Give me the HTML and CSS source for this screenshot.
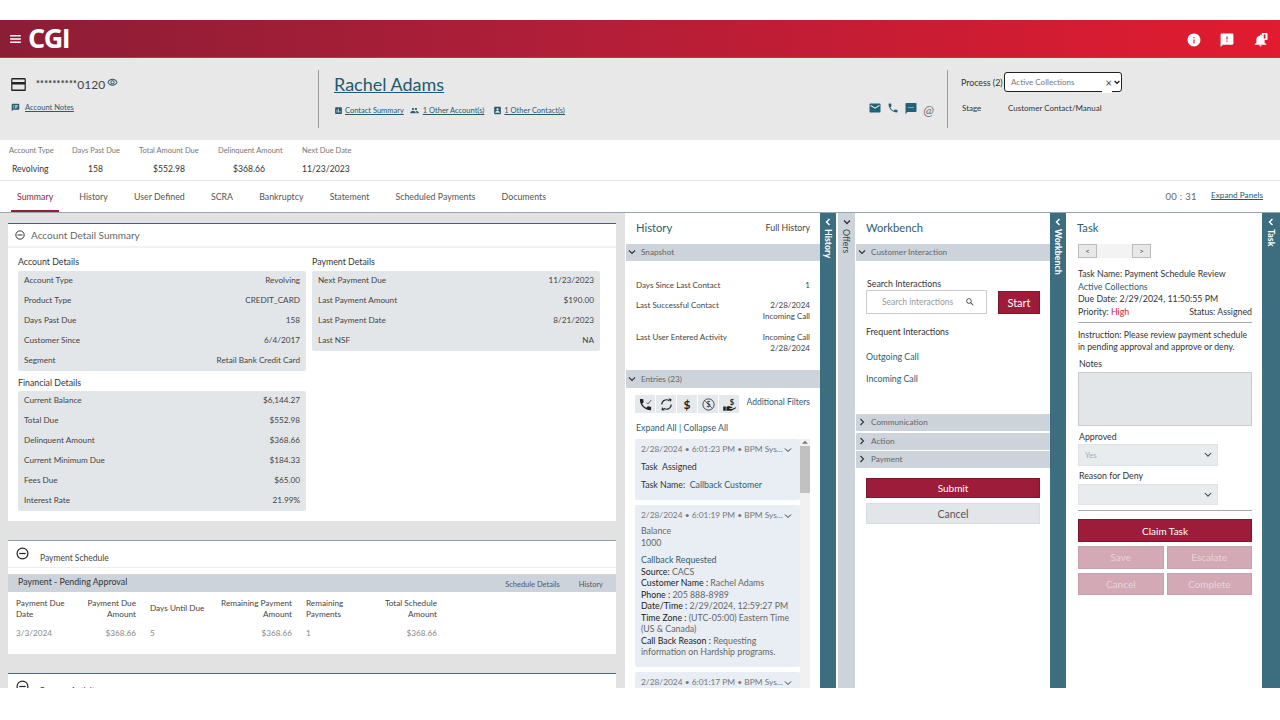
FILE: index.html
```html
<!DOCTYPE html>
<html lang="en">
<head>
    <meta charset="UTF-8">
    <meta name="viewport" content="width=device-width, initial-scale=1.0">
    <title>Collections Workspace</title>
    <link rel="stylesheet" href="styles.css">
</head>
<body>
    <div class="page">
        <header class="topbar">
            <svg class="menu-icon" viewBox="0 0 12 9"><path d="M0 0h12v1.800H0zM0 3.600h12v1.800H0zM0 7.200h12V9H0z"/></svg>
            <span class="logo">CGI</span>
            <div class="topbar-icons">
                <svg viewBox="0 0 24 24"><path d="M12 1C5.900 1 1 5.900 1 12s4.900 11 11 11 11-4.900 11-11S18.100 1 12 1zm1 17h-2v-7h2v7zm0-9h-2V7h2v2z"/></svg>
                <svg viewBox="0 0 24 24"><path d="M21 1H3C1.900 1 1 1.900 1 3v21l4-4h16c1.100 0 2-.9 2-2V3c0-1.100-.9-2-2-2zm-8 10h-2V6h2v5zm0 4h-2v-2h2v2z"/></svg>
                <svg class="bell" viewBox="0 0 24 24">
                    <path d="M12 23c1.100 0 2-.9 2-2h-4c0 1.100.89 2 2 2zm7-6v-6c0-3.070-1.640-5.640-5-6.320V4c0-.83-.67-1.500-1.500-1.500S11 3.170 11 4v.68C6.630 5.360 5 7.920 5 11v6l-3 2v1h20v-1l-3-2z"/>
                    <rect x="14" y="0" width="10" height="12" rx="1.500"/>
                    <rect x="17.500" y="2.500" width="3" height="7" fill="#e01b2f"/>
                </svg>
            </div>
        </header>

        <section class="account-bar">
            <div class="account-col">
                <div class="account-number">
                    <svg class="card-icon" viewBox="3 4 18 16"><path d="M19.500 4h-15C3.400 4 3 4.900 3 6v12c0 1.100.4 2 1.500 2h15c1.100 0 1.500-.9 1.500-2V6c0-1.100-.4-2-1.500-2zm0 14.200h-15V12h15v6.200zm0-9.200h-15V5.800h15V9z"/></svg>
                    <span class="stars">**********</span><span class="last-digits">0120</span>
                    <svg class="eye-icon" viewBox="0 0 24 24"><path d="M12 6c3.790 0 7.170 2.130 8.820 5.500C19.170 14.870 15.790 17 12 17s-7.170-2.130-8.820-5.500C4.830 8.130 8.210 6 12 6m0-2C7 4 2.730 7.110 1 11.500 2.730 15.890 7 19 12 19s9.270-3.110 11-7.500C21.270 7.110 17 4 12 4zm0 5c1.380 0 2.500 1.120 2.500 2.500S13.380 14 12 14s-2.500-1.120-2.500-2.500S10.620 9 12 9m0-2c-2.480 0-4.500 2.020-4.500 4.500S9.520 16 12 16s4.500-2.020 4.500-4.500S14.480 7 12 7z"/></svg>
                </div>
                <div class="account-notes">
                    <svg class="small-icon" viewBox="0 0 24 24"><path d="M20 2H4c-1.100 0-1.990.9-1.990 2L2 22l4-4h14c1.100 0 2-.9 2-2V4c0-1.100-.9-2-2-2zM8 14H6v-2h2v2zm0-3H6V9h2v2zm0-3H6V6h2v2zm7 6h-5v-2h5v2zm3-3h-8V9h8v2zm0-3h-8V6h8v2z"/></svg>
                    <a href="#" class="small-link">Account Notes</a>
                </div>
            </div>
            <div class="contact-col">
                <div class="contact-main">
                    <a href="#" class="contact-name">Rachel Adams</a>
                    <div class="contact-links">
                        <svg class="small-icon" viewBox="0 0 24 24"><path d="M19 3H5c-1.100 0-2 .9-2 2v14c0 1.100.9 2 2 2h14c1.100 0 2-.9 2-2V5c0-1.100-.9-2-2-2zM9 17H7v-7h2v7zm4 0h-2V7h2v10zm4 0h-2v-4h2v4z"/></svg>
                        <a href="#" class="small-link">Contact Summary</a>
                        <svg class="small-icon people" viewBox="0 0 24 24"><path d="M16 11c1.660 0 2.990-1.340 2.990-3S17.660 5 16 5c-1.660 0-3 1.340-3 3s1.340 3 3 3zm-8 0c1.660 0 2.990-1.340 2.990-3S9.660 5 8 5C6.340 5 5 6.340 5 8s1.340 3 3 3zm0 2c-2.330 0-7 1.170-7 3.500V19h14v-2.500c0-2.330-4.670-3.500-7-3.500zm8 0c-.29 0-.62.02-.97.05 1.160.84 1.970 1.970 1.970 3.450V19h6v-2.500c0-2.330-4.670-3.500-7-3.500z"/></svg>
                        <a href="#" class="small-link accounts-link">1 Other Account(s)</a>
                        <svg class="small-icon contact-card" viewBox="0 0 24 24"><path d="M19 2H5c-1.100 0-2 .9-2 2v16c0 1.100.9 2 2 2h14c1.100 0 2-.9 2-2V4c0-1.100-.9-2-2-2zm-7 4c1.660 0 3 1.340 3 3s-1.340 3-3 3-3-1.340-3-3 1.340-3 3-3zm6 12H6v-1.400c0-2 4-3.100 6-3.100s6 1.100 6 3.100V18z"/></svg>
                        <a href="#" class="small-link">1 Other Contact(s)</a>
                    </div>
                </div>
                <div class="contact-icons">
                    <svg viewBox="0 0 24 24"><path d="M21 3H3C1.900 3 1 3.900 1 5v14c0 1.100.9 2 2 2h18c1.100 0 2-.9 2-2V5c0-1.100-.9-2-2-2zm0 5l-9 5.500L3 8V5.500l9 5.500 9-5.500V8z"/></svg>
                    <svg viewBox="0 0 24 24"><path d="M6.620 10.790c1.440 2.830 3.760 5.140 6.590 6.590l2.200-2.200c.27-.27.67-.36 1.020-.24 1.120.37 2.330.57 3.570.57.55 0 1 .45 1 1V20c0 .55-.45 1-1 1-9.390 0-17-7.610-17-17 0-.55.45-1 1-1h3.500c.55 0 1 .45 1 1 0 1.250.2 2.450.57 3.570.11.350.03.74-.25 1.020l-2.200 2.200z"/></svg>
                    <svg viewBox="0 0 24 24"><path d="M21 2H3C1.900 2 1 2.900 1 4v20l4-4h16c1.100 0 2-.9 2-2V4c0-1.100-.9-2-2-2zM9 12H7v-2h2v2zm4 0h-2v-2h2v2zm4 0h-2v-2h2v2z"/></svg>
                    <span class="at-sign">@</span>
                </div>
            </div>
            <div class="process-col">
                <div class="process-row">
                    <span class="process-label">Process (2)</span>
                    <div class="process-select">
                        <span class="process-value">Active Collections</span>
                        <span class="process-clear">×</span>
                        <svg class="process-arrow" viewBox="0 0 10 7"><path d="M1 1l4 4 4-4" fill="none" stroke="#111" stroke-width="2"/></svg>
                    </div>
                </div>
                <div class="stage-row">
                    <span class="stage-label">Stage</span>
                    <span>Customer Contact/Manual</span>
                </div>
            </div>
        </section>

        <section class="metrics">
            <div class="metric m-type"><span class="metric-label">Account Type</span><span class="metric-value">Revolving</span></div>
            <div class="metric m-days"><span class="metric-label">Days Past Due</span><span class="metric-value">158</span></div>
            <div class="metric m-total"><span class="metric-label">Total Amount Due</span><span class="metric-value">$552.98</span></div>
            <div class="metric m-delinquent"><span class="metric-label">Delinquent Amount</span><span class="metric-value">$368.66</span></div>
            <div class="metric m-next"><span class="metric-label">Next Due Date</span><span class="metric-value">11/23/2023</span></div>
        </section>

        <nav class="tabs">
            <a href="#" class="tab active">Summary</a>
            <a href="#" class="tab">History</a>
            <a href="#" class="tab">User Defined</a>
            <a href="#" class="tab">SCRA</a>
            <a href="#" class="tab">Bankruptcy</a>
            <a href="#" class="tab">Statement</a>
            <a href="#" class="tab">Scheduled Payments</a>
            <a href="#" class="tab">Documents</a>
            <span class="timer">00 : 31</span>
            <a href="#" class="small-link expand-panels">Expand Panels</a>
        </nav>

        <main class="workspace">
            <div class="summary-col">
                <section class="card detail-card">
                    <div class="detail-header">
                        <svg class="minus-icon" viewBox="0 0 12 12"><circle cx="6" cy="6" r="5" /><path d="M3 6h6"/></svg>
                        <span>Account Detail Summary</span>
                    </div>
                    <div class="detail-body">
                        <div class="detail-col">
                            <h4>Account Details</h4>
                            <div class="kv-box">
                                <div class="kv"><span>Account Type</span><span>Revolving</span></div>
                                <div class="kv"><span>Product Type</span><span>CREDIT_CARD</span></div>
                                <div class="kv"><span>Days Past Due</span><span>158</span></div>
                                <div class="kv"><span>Customer Since</span><span>6/4/2017</span></div>
                                <div class="kv"><span>Segment</span><span>Retail Bank Credit Card</span></div>
                            </div>
                            <h4>Financial Details</h4>
                            <div class="kv-box">
                                <div class="kv"><span>Current Balance</span><span>$6,144.27</span></div>
                                <div class="kv"><span>Total Due</span><span>$552.98</span></div>
                                <div class="kv"><span>Delinquent Amount</span><span>$368.66</span></div>
                                <div class="kv"><span>Current Minimum Due</span><span>$184.33</span></div>
                                <div class="kv"><span>Fees Due</span><span>$65.00</span></div>
                                <div class="kv"><span>Interest Rate</span><span>21.99%</span></div>
                            </div>
                        </div>
                        <div class="detail-col">
                            <h4>Payment Details</h4>
                            <div class="kv-box">
                                <div class="kv"><span>Next Payment Due</span><span>11/23/2023</span></div>
                                <div class="kv"><span>Last Payment Amount</span><span>$190.00</span></div>
                                <div class="kv"><span>Last Payment Date</span><span>8/21/2023</span></div>
                                <div class="kv"><span>Last NSF</span><span>NA</span></div>
                            </div>
                        </div>
                    </div>
                </section>

                <section class="card schedule-card">
                    <div class="schedule-header">
                        <svg class="minus-icon large" viewBox="0 0 12 12"><circle cx="6" cy="6" r="5" /><path d="M3 6h6"/></svg>
                        <span>Payment Schedule</span>
                    </div>
                    <div class="schedule-bar">
                        <span class="schedule-title">Payment - Pending Approval</span>
                        <span class="schedule-link">Schedule Details</span>
                        <span class="schedule-link">History</span>
                    </div>
                    <div class="schedule-grid">
                        <div class="head">Payment Due<br>Date</div>
                        <div class="head right">Payment Due<br>Amount</div>
                        <div class="head pad">Days Until Due</div>
                        <div class="head right">Remaining Payment<br>Amount</div>
                        <div class="head pad">Remaining<br>Payments</div>
                        <div class="head right">Total Schedule<br>Amount</div>
                        <div class="cell">3/3/2024</div>
                        <div class="cell right">$368.66</div>
                        <div class="cell pad">5</div>
                        <div class="cell right">$368.66</div>
                        <div class="cell pad">1</div>
                        <div class="cell right">$368.66</div>
                    </div>
                </section>

                <section class="card activity-card">
                    <div class="schedule-header">
                        <svg class="minus-icon large" viewBox="0 0 12 12"><circle cx="6" cy="6" r="5" /><path d="M3 6h6"/></svg>
                        <span>Process Activity</span>
                    </div>
                </section>
            </div>

            <section class="panel history-panel">
                <div class="panel-title"><h3>History</h3><a href="#" class="full-history">Full History</a></div>
                <div class="bar"><svg class="bar-arrow" viewBox="0 0 8 8"><path d="M1 2.500l3 3 3-3"/></svg>Snapshot</div>
                <div class="snapshot">
                    <div class="snap-row"><span>Days Since Last Contact</span><span>1</span></div>
                    <div class="snap-row"><span>Last Successful Contact</span><span>2/28/2024<br>Incoming Call</span></div>
                    <div class="snap-row"><span>Last User Entered Activity</span><span>Incoming Call<br>2/28/2024</span></div>
                </div>
                <div class="bar entries-bar"><svg class="bar-arrow" viewBox="0 0 8 8"><path d="M1 2.500l3 3 3-3"/></svg>Entries (23)</div>
                <div class="filters">
                    <div class="filter-icons">
                        <span class="filter-btn">
                            <svg viewBox="0 0 24 24"><path d="M6.620 10.790c1.440 2.830 3.760 5.140 6.590 6.590l2.200-2.200c.27-.27.67-.36 1.020-.24 1.120.37 2.330.57 3.570.57.55 0 1 .45 1 1V20c0 .55-.45 1-1 1-9.390 0-17-7.610-17-17 0-.55.45-1 1-1h3.500c.55 0 1 .45 1 1 0 1.250.2 2.450.57 3.570.11.350.03.74-.25 1.020l-2.200 2.200z"/><path d="M14 9l2 2 5-6" fill="none" stroke="#222" stroke-width="1.200"/></svg>
                        </span>
                        <span class="filter-btn">
                            <svg viewBox="0 0 24 24"><path d="M4.500 12a7.500 7.500 0 0 1 12-6" fill="none" stroke="#222" stroke-width="1.800"/><path d="M15 2.500l5 .5-1 5z"/><path d="M19.500 12a7.500 7.500 0 0 1-12 6" fill="none" stroke="#222" stroke-width="1.800"/><path d="M9 21.500L4 21l1-5z"/></svg>
                        </span>
                        <span class="filter-btn dollar">$</span>
                        <span class="filter-btn">
                            <svg viewBox="0 0 24 24"><circle cx="12" cy="12" r="9" fill="none" stroke="#222" stroke-width="1.300"/><path d="M6 6l12 12" stroke="#222" stroke-width="1"/><text x="12" y="16" text-anchor="middle" font-size="12" font-family="Lato, sans-serif">$</text></svg>
                        </span>
                        <span class="filter-btn">
                            <svg viewBox="0 0 24 24"><path d="M2 15h4v7H2zM7 15.500l4-1 5 1.500c1 .5.5 2-.5 2H12v1l4 .2 6-3c.8 1-.1 2-.5 2.300L15 22H7z"/><text x="16" y="12" text-anchor="middle" font-size="12" font-family="Lato, sans-serif" font-weight="700">$</text></svg>
                        </span>
                    </div>
                    <a href="#" class="more-filters">Additional Filters</a>
                </div>
                <div class="expand-row"><a href="#">Expand All</a> | <a href="#">Collapse All</a></div>
                <div class="entries-wrap">
                    <div class="entries">
                        <article class="entry first">
                            <div class="entry-head"><span>2/28/2024 • 6:01:23 PM • BPM Sys...</span><svg class="entry-arrow" viewBox="0 0 8 8"><path d="M1 2.500l3 3 3-3"/></svg></div>
                            <p class="task-line">Task&nbsp; Assigned</p>
                            <p class="task-line name">Task Name:&nbsp; <span class="entry-link">Callback Customer</span></p>
                        </article>
                        <article class="entry">
                            <div class="entry-head"><span>2/28/2024 • 6:01:19 PM • BPM Sys...</span><svg class="entry-arrow" viewBox="0 0 8 8"><path d="M1 2.500l3 3 3-3"/></svg></div>
                            <p class="balance">Balance<br>1000</p>
                            <p class="callback">
                                <span class="entry-link">Callback Requested</span><br>
                                <b>Source:</b> CACS<br>
                                <b>Customer Name :</b> Rachel Adams<br>
                                <b>Phone :</b> 205 888-8989<br>
                                <b>Date/Time :</b> 2/29/2024, 12:59:27 PM<br>
                                <b>Time Zone :</b> (UTC-05:00) Eastern Time (US &amp; Canada)<br>
                                <b>Call Back Reason :</b> Requesting information on Hardship programs.
                            </p>
                        </article>
                        <article class="entry">
                            <div class="entry-head"><span>2/28/2024 • 6:01:17 PM • BPM Sys...</span><svg class="entry-arrow" viewBox="0 0 8 8"><path d="M1 2.500l3 3 3-3"/></svg></div>
                        </article>
                    </div>
                    <div class="scrollbar"><svg viewBox="0 0 8 6"><path d="M1.500 4L4 1.500 6.500 4z"/></svg><div class="thumb"></div></div>
                </div>
            </section>

            <aside class="strip teal history-strip"><svg class="strip-arrow" viewBox="0 0 8 8"><path d="M5.500 1L2.500 4l3 3"/></svg><span>History</span></aside>
            <aside class="strip gray"><svg class="strip-arrow" viewBox="0 0 8 8"><path d="M1 2.500l3 3 3-3"/></svg><span>Offers</span></aside>

            <section class="panel workbench-panel">
                <div class="panel-title"><h3>Workbench</h3></div>
                <div class="bar"><svg class="bar-arrow" viewBox="0 0 8 8"><path d="M1 2.500l3 3 3-3"/></svg>Customer Interaction</div>
                <div class="interaction">
                    <label class="search-label">Search Interactions</label>
                    <div class="search-row">
                        <div class="search-box">
                            <span>Search interactions</span>
                            <svg viewBox="0 0 24 24"><path d="M15.500 14h-.79l-.28-.27C15.410 12.590 16 11.110 16 9.500 16 5.910 13.090 3 9.500 3S3 5.910 3 9.500 5.910 16 9.500 16c1.610 0 3.090-.59 4.230-1.570l.27.28v.79l5 4.990L20.490 19l-4.990-5zm-6 0C7.010 14 5 11.990 5 9.500S7.010 5 9.500 5 14 7.010 14 9.500 11.990 14 9.500 14z"/></svg>
                        </div>
                        <button class="btn primary start">Start</button>
                    </div>
                    <div class="frequent">Frequent Interactions</div>
                    <a href="#" class="interaction-link">Outgoing Call</a>
                    <a href="#" class="interaction-link">Incoming Call</a>
                </div>
                <div class="bar closed"><svg class="bar-arrow" viewBox="0 0 8 8"><path d="M2.500 1l3 3-3 3"/></svg>Communication</div>
                <div class="bar closed tight"><svg class="bar-arrow" viewBox="0 0 8 8"><path d="M2.500 1l3 3-3 3"/></svg>Action</div>
                <div class="bar closed"><svg class="bar-arrow" viewBox="0 0 8 8"><path d="M2.500 1l3 3-3 3"/></svg>Payment</div>
                <div class="workbench-actions">
                    <button class="btn primary submit">Submit</button>
                    <button class="btn neutral">Cancel</button>
                </div>
            </section>

            <aside class="strip teal"><svg class="strip-arrow" viewBox="0 0 8 8"><path d="M5.500 1L2.500 4l3 3"/></svg><span>Workbench</span></aside>

            <section class="panel task-panel">
                <div class="panel-title"><h3>Task</h3></div>
                <div class="pager">
                    <button class="pager-btn">&lt;</button>
                    <span class="pager-mid"></span>
                    <button class="pager-btn">&gt;</button>
                </div>
                <div class="task-info">
                    <div>Task Name: Payment Schedule Review</div>
                    <div class="entry-link">Active Collections</div>
                    <div>Due Date: 2/29/2024, 11:50:55 PM</div>
                    <div class="priority-row"><span>Priority: <span class="high">High</span></span><span>Status: Assigned</span></div>
                </div>
                <hr class="task-rule">
                <p class="instruction">Instruction: Please review payment schedule<br>in pending approval and approve or deny.</p>
                <label class="field-label notes-label">Notes</label>
                <div class="notes"></div>
                <label class="field-label approved-label">Approved</label>
                <div class="select-box"><span>Yes</span><svg viewBox="0 0 10 7"><path d="M1 1l4 4 4-4"/></svg></div>
                <label class="field-label reason-label">Reason for Deny</label>
                <div class="select-box reason-select"><span></span><svg viewBox="0 0 10 7"><path d="M1 1l4 4 4-4"/></svg></div>
                <hr class="task-rule second">
                <button class="btn primary claim">Claim Task</button>
                <div class="task-actions">
                    <button class="btn disabled">Save</button>
                    <button class="btn disabled">Escalate</button>
                    <button class="btn disabled">Cancel</button>
                    <button class="btn disabled">Complete</button>
                </div>
            </section>

            <aside class="strip teal last"><svg class="strip-arrow" viewBox="0 0 8 8"><path d="M5.500 1L2.500 4l3 3"/></svg><span>Task</span></aside>
        </main>
    </div>
</body>
</html>
```

FILE: styles.css
```css
* {
    box-sizing: border-box;
}

html, body {
    margin: 0;
    height: 100%;
    background: #fff;
}

body {
    font-family: Lato, "Noto Sans", sans-serif;
    font-size: 8.800px;
    color: #333;
    overflow: hidden;
}

a {
    color: inherit;
    text-decoration: none;
}

p, h3, h4 {
    margin: 0;
    font-weight: 400;
}

.page {
    height: 688px;
    margin-top: 20px;
    overflow: hidden;
}

/* top red bar */
.topbar {
    height: 38px;
    display: flex;
    align-items: center;
    padding-left: 10px;
    background: linear-gradient(90deg, #8c1d36 0%, #b21e38 45%, #e21b2f 100%);
    border-bottom: 1px solid #c8313f;
}

.menu-icon {
    width: 11px;
    height: 8px;
    margin-top: 1px;
    fill: #fff;
}

.logo {
    margin: -3px 0 0 7px;
    font-family: "Open Sans", sans-serif;
    font-size: 27px;
    font-weight: 700;
    letter-spacing: -1.500px;
    color: #fff;
    line-height: 1;
}

.topbar-icons {
    margin: 3px 0 0 auto;
    display: flex;
    align-items: center;
    gap: 19px;
    padding-right: 12px;
}

.topbar-icons svg {
    width: 14px;
    height: 14px;
    fill: #fff;
}

.topbar-icons .bell {
    width: 15px;
}

/* account strip */
.account-bar {
    height: 82px;
    display: flex;
    padding-top: 12px;
    background: #e8e8e8;
}

.account-col {
    width: 319px;
    height: 58px;
    padding-left: 11px;
    border-right: 1px solid #9a9a9a;
}

.account-number {
    display: flex;
    align-items: center;
    height: 18px;
    margin-top: 5px;
}

.card-icon {
    width: 15px;
    height: 13px;
    fill: #222;
    margin-right: 10px;
}

.stars {
    font-size: 9px;
    font-weight: 700;
    letter-spacing: .3px;
    color: #333;
    margin-top: -1px;
}

.last-digits {
    font-size: 12px;
    color: #444;
}

.eye-icon {
    width: 11px;
    height: 11px;
    margin: -4px 0 0 2px;
    fill: #2b5a6c;
}

.account-notes {
    display: flex;
    align-items: center;
    margin-top: 10px;
}

.small-icon {
    width: 9px;
    height: 9px;
    fill: #2b5a6c;
    flex-shrink: 0;
}

.small-link {
    font-size: 7.500px;
    color: #2b5a6c;
    text-decoration: underline;
    white-space: nowrap;
}

.account-notes .small-link {
    margin-left: 5px;
}

.contact-col {
    width: 629px;
    height: 58px;
    display: flex;
    padding-left: 15px;
    border-right: 1px solid #9a9a9a;
}

.contact-main {
    flex: 1;
}

.contact-name {
    display: block;
    margin-top: 3px;
    font-size: 18px;
    line-height: 22px;
    color: #1f5a6e;
    text-decoration: underline;
}

.contact-links {
    display: flex;
    align-items: center;
    margin-top: 11px;
}

.contact-links .small-link {
    margin-left: 2px;
}

.contact-links .people {
    margin-left: 6px;
}

.contact-links .accounts-link {
    margin-left: 4px;
}

.contact-links .contact-card {
    margin-left: 9px;
}

.contact-icons {
    display: flex;
    align-items: center;
    gap: 6px;
    height: 14px;
    margin: 31px 13px 0 0;
}

.contact-icons svg {
    width: 12px;
    height: 12px;
    fill: #22617a;
}

.at-sign {
    font-size: 14px;
    font-style: italic;
    color: #777;
    margin-top: 2px;
}

.process-col {
    flex: 1;
    padding-left: 13px;
}

.process-row {
    display: flex;
    align-items: center;
    height: 20px;
    margin-top: 2px;
}

.process-label {
    width: 43px;
    white-space: nowrap;
}

.process-select {
    position: relative;
    width: 118px;
    height: 20px;
    display: flex;
    align-items: center;
    padding-left: 6px;
    background: #fff;
    border: 1px solid #222;
    border-radius: 3px;
}

/* gap the clear button leaves in the bottom border */
.process-select::after {
    content: "";
    position: absolute;
    left: 97px;
    bottom: -2px;
    width: 10px;
    height: 3px;
    background: #fff;
}

.process-value {
    font-size: 8px;
    color: #777;
    margin-top: -1px;
}

.process-clear {
    margin-left: auto;
    font-size: 11px;
    color: #444;
}

.process-arrow {
    width: 6px;
    height: 5px;
    margin: 0 1px 0 2px;
}

.stage-row {
    display: flex;
    margin: 11px 0 0 1px;
    font-size: 8px;
}

.stage-label {
    width: 46px;
}

/* key figures */
.metrics {
    height: 41px;
    display: flex;
    padding-left: 9px;
    border-bottom: 1px solid #e3e3e3;
}

.metric {
    display: flex;
    flex-direction: column;
    align-items: flex-start;
    padding-top: 5px;
    white-space: nowrap;
}

.metric-label {
    font-size: 7.500px;
    line-height: 11px;
    color: #777;
}

.metric-value {
    margin-top: 7px;
    font-size: 8.600px;
    line-height: 12px;
    color: #333;
}

.m-type { width: 63px; }
.m-days { width: 67px; }
.m-total { width: 79px; }
.m-delinquent { width: 84px; }

.m-type .metric-value { margin-left: 3px; }
.m-days .metric-value { margin-left: 16px; }
.m-total .metric-value { margin-left: 14px; }
.m-delinquent .metric-value { margin-left: 15px; }

/* tabs */
.tabs {
    height: 31px;
    display: flex;
    align-items: stretch;
    gap: 14.200px;
    padding: 0 17px 0 11px;
}

.tab {
    display: flex;
    align-items: center;
    padding: 2px 6px 0;
    font-size: 8.800px;
    color: #555;
    white-space: nowrap;
    border-bottom: 2px solid transparent;
}

.tab.active {
    color: #9b1c3a;
    border-bottom-color: #9b1c3a;
}

.timer {
    margin-left: auto;
    align-self: center;
    font-size: 9.500px;
    letter-spacing: .3px;
    color: #666;
}

.expand-panels {
    align-self: center;
    margin-top: -3px;
    font-size: 8.200px;
}

/* main area */
.workspace {
    height: 476px;
    display: flex;
    border-top: 1px solid #97a8b0;
    background: #fff;
}

.summary-col {
    width: 625px;
    padding: 10px 9px 0 8px;
    background: #e2e2e2;
    overflow: hidden;
}

.card {
    background: #fff;
    border-top: 1px solid #2f6a7e;
}

.detail-card {
    height: 298px;
    margin-bottom: 19px;
}

.detail-header {
    height: 22px;
    display: flex;
    align-items: center;
    padding-left: 7px;
    font-size: 10px;
    color: #666;
    border-bottom: 2px solid #f1f1f1;
    box-sizing: content-box;
}

.minus-icon {
    width: 10px;
    height: 10px;
    margin-right: 6px;
    fill: none;
    stroke: #222;
    stroke-width: 1.100;
}

.minus-icon.large {
    width: 13px;
    height: 13px;
    margin: -8px 11px 0 0;
}

.detail-body {
    display: flex;
    padding: 8px 0 0 10px;
}

.detail-col {
    width: 288px;
    margin-right: 6px;
}

.detail-col h4 {
    font-size: 8.800px;
    line-height: 12px;
    margin-bottom: 3px;
    color: #333;
}

.kv-box {
    background: #e3e6e9;
    border-radius: 2px;
    padding: 0 6px;
    margin-bottom: 5px;
}

.detail-col .kv-box + h4 {
    margin-top: 6px;
    margin-bottom: 2px;
}

.kv {
    height: 20px;
    display: flex;
    align-items: center;
    justify-content: space-between;
    padding-bottom: 2px;
    font-size: 8.200px;
    color: #444;
}

.schedule-card {
    height: 114px;
    margin-bottom: 19px;
    border-top-color: #8d9ca4;
}

.schedule-header {
    height: 27px;
    display: flex;
    align-items: center;
    padding: 6px 0 0 8px;
    font-size: 8.500px;
    color: #444;
    border-bottom: 1px solid #eee;
}

.schedule-header span {
    margin-top: 2px;
}

.schedule-bar {
    height: 18px;
    display: flex;
    align-items: center;
    margin-top: 6px;
    padding: 0 13px 0 10px;
    gap: 19px;
    background: #ccd3da;
}

.schedule-title {
    margin: -3px auto 0 0;
    font-size: 8.800px;
    color: #333;
}

.schedule-link {
    margin-top: 3px;
    font-size: 7.500px;
    color: #556;
}

.schedule-grid {
    display: grid;
    grid-template-columns: 64px 56px 80px 76px 84px 61px;
    align-items: center;
    padding: 6px 0 0 8px;
    font-size: 8.200px;
    line-height: 10.500px;
    white-space: nowrap;
}

.schedule-grid .right {
    text-align: right;
}

.schedule-grid .pad {
    padding-left: 14px;
}

.schedule-grid .head {
    color: #444;
}

.schedule-grid .cell {
    padding-top: 9px;
    color: #888;
}

.activity-card {
    height: 40px;
    border-top-color: #4a6a78;
}

/* side panels */
.panel {
    flex-shrink: 0;
    overflow: hidden;
}

.panel-title {
    height: 31px;
    display: flex;
    align-items: center;
    justify-content: space-between;
    padding: 0 10px 2px;
}

.panel-title h3 {
    font-size: 11.200px;
    color: #2f5d6e;
}

.full-history {
    font-size: 8.800px;
    color: #444;
    margin-top: -1px;
}

.bar {
    height: 17px;
    display: flex;
    align-items: center;
    padding-bottom: 1px;
    font-size: 8.200px;
    color: #666;
    background: #ccd3da;
    margin-bottom: 2px;
}

.bar-arrow {
    width: 8px;
    height: 8px;
    margin: 0 5px 0 2px;
    fill: none;
    stroke: #333;
    stroke-width: 1.100;
}

.history-panel {
    width: 194px;
    margin-left: 1px;
}

.snapshot {
    height: 107px;
    padding: 17px 10px 0;
}

.snap-row {
    display: flex;
    justify-content: space-between;
    margin-bottom: 9px;
    font-size: 8px;
    line-height: 11px;
    color: #444;
}

.snap-row:nth-child(2) {
    margin-bottom: 10px;
}

.snap-row span:last-child {
    text-align: right;
}

.entries-bar {
    height: 18px;
}

.filters {
    display: flex;
    justify-content: space-between;
    padding: 5px 10px 0 9px;
}

.filter-icons {
    display: flex;
    gap: 1px;
}

.filter-btn {
    width: 20px;
    height: 18px;
    display: flex;
    align-items: center;
    justify-content: center;
    background: #e6e9ec;
}

.filter-btn svg {
    width: 15px;
    height: 15px;
    fill: #222;
}

.dollar {
    font-size: 12px;
    font-weight: 700;
    color: #222;
}

.more-filters {
    font-size: 8.500px;
    color: #2f5d6e;
    margin-top: 2px;
}

.expand-row {
    margin: 9px 0 5px 10px;
    line-height: 12px;
    color: #2f5d6e;
}

.entries-wrap {
    display: flex;
    margin-left: 9px;
    width: 175px;
    height: 260px;
}

.entries {
    width: 165px;
}

.entry {
    padding: 0 6px;
    margin-bottom: 5px;
    background: #e8eef3;
    border-radius: 2px;
    line-height: 11.500px;
    color: #555;
}

.entry.first {
    height: 61px;
}

.entry-head {
    height: 21px;
    display: flex;
    align-items: center;
    justify-content: space-between;
    font-size: 8.400px;
    color: #777;
    white-space: nowrap;
}

.entry-arrow {
    width: 8px;
    height: 8px;
    margin-right: 2px;
    fill: none;
    stroke: #333;
    stroke-width: 1;
}

.task-line {
    margin-top: 1px;
    color: #333;
}

.task-line.name {
    margin-top: 6px;
}

.entry-link {
    color: #2f5d6e;
}

.balance {
    margin: -1px 0 5px;
    line-height: 12px;
    color: #666;
}

.callback {
    padding-bottom: 9.500px;
    color: #666;
}

.callback b {
    font-weight: 400;
    color: #222;
}

.scrollbar {
    width: 10px;
    background: #f1f1f1;
}

.scrollbar svg {
    display: block;
    width: 10px;
    height: 7px;
    fill: #777;
}

.thumb {
    height: 47px;
    background: #c1c1c1;
}

/* collapsed side strips */
.strip {
    width: 17px;
    flex-shrink: 0;
    display: flex;
    flex-direction: column;
    align-items: center;
    padding-top: 5px;
    font-size: 8.800px;
    border-right: 1px solid #fff;
}

.strip span {
    writing-mode: vertical-rl;
    margin-top: 3px;
}

.strip-arrow {
    width: 8px;
    height: 8px;
    fill: none;
    stroke-width: 1.400;
}

.strip.teal {
    background: #3d6e80;
    color: #fff;
    font-weight: 700;
    stroke: #fff;
}

.strip.history-strip {
    width: 18px;
    border-right-width: 2px;
}

.strip.gray {
    width: 18px;
    background: #ccd3da;
    color: #444;
    stroke: #333;
}

.strip.last {
    width: 18px;
    border-right: 0;
}

.workbench-panel {
    width: 194px;
}

.interaction {
    height: 151px;
    padding: 15px 10px 0;
}

.search-label {
    display: block;
    margin-left: 1px;
    line-height: 12px;
    color: #333;
}

.search-row {
    display: flex;
    justify-content: space-between;
}

.search-box {
    width: 121px;
    height: 24px;
    display: flex;
    align-items: center;
    justify-content: space-between;
    padding: 0 11px 0 15px;
    border: 1px solid #ccc;
    color: #999;
    font-size: 8.500px;
}

.search-box svg {
    width: 10px;
    height: 10px;
    fill: #444;
}

.btn {
    display: block;
    width: 100%;
    padding: 0;
    border: 0;
    font-family: inherit;
    font-size: 10px;
}

.btn.primary {
    background: #9c1c3a;
    border: 1px solid #7a1a30;
    color: #fff;
}

.btn.neutral {
    background: #e3e6e9;
    border: 1px solid #dadde0;
    font-size: 10.500px;
    color: #555;
}

.btn.disabled {
    height: 22.500px;
    background: #d3a9b6;
    border: 1px solid #c6a1ad;
    color: #e8d3da;
}

.btn.start {
    width: 42px;
    height: 23px;
    margin-top: 1px;
    font-size: 11px;
}

.frequent {
    margin-top: 12px;
    line-height: 12px;
    color: #333;
}

.interaction-link {
    display: block;
    margin-top: 13px;
    line-height: 12px;
    color: #2f5d6e;
}

.interaction-link + .interaction-link {
    margin-top: 10px;
}

.bar.closed {
    height: 17px;
}

.bar.tight {
    margin-bottom: 1px;
}

.workbench-actions {
    padding: 8px 10px 0;
}

.workbench-actions .btn {
    height: 21px;
}

.workbench-actions .btn.submit {
    height: 20px;
    margin-bottom: 5px;
}

.task-panel {
    width: 195px;
    padding: 0 10px 0 11px;
}

.task-panel .panel-title {
    padding: 0 0 2px;
    margin-left: -1px;
}

.pager {
    display: flex;
    height: 14px;
    margin-bottom: 10px;
}

.pager-btn {
    width: 19px;
    padding: 0;
    background: #e8e8e8;
    border: 1px solid #bbb;
    font-family: inherit;
    font-size: 8px;
    color: #444;
}

.pager-mid {
    width: 35px;
    background: #f3f3f3;
}

.task-info {
    line-height: 12.500px;
    color: #333;
}

.priority-row {
    display: flex;
    justify-content: space-between;
}

.high {
    color: #d8213b;
}

.task-rule {
    height: 1px;
    margin: 4px 0 0;
    border: 0;
    background: #aaa;
}

.task-rule.second {
    margin-top: 5px;
}

.instruction {
    margin-top: 6px;
    font-size: 8.700px;
    line-height: 12px;
    color: #333;
    white-space: nowrap;
}

.field-label {
    display: block;
    margin-left: 1px;
    line-height: 12px;
    color: #333;
}

.notes-label {
    margin-top: 5px;
}

.notes {
    height: 54px;
    margin-top: 2px;
    background: #e3e6e9;
    border: 1px solid #ccc;
}

.approved-label {
    margin-top: 5px;
}

.select-box {
    width: 140px;
    height: 22px;
    display: flex;
    align-items: center;
    justify-content: space-between;
    padding: 0 5px 0 6px;
    margin-top: 1px;
    background: #e9ecee;
    border: 1px solid #dfe2e4;
    color: #aaa;
    font-size: 8px;
}

.select-box svg {
    width: 8px;
    height: 6px;
    fill: none;
    stroke: #444;
    stroke-width: 1.300;
}

.reason-label {
    margin-top: 4px;
}

.reason-select {
    height: 21px;
    margin-top: 2px;
}

.claim {
    height: 23px;
    margin-top: 8px;
}

.task-actions {
    display: grid;
    grid-template-columns: 1fr 1fr;
    gap: 4px 3px;
    margin-top: 4px;
}
```
